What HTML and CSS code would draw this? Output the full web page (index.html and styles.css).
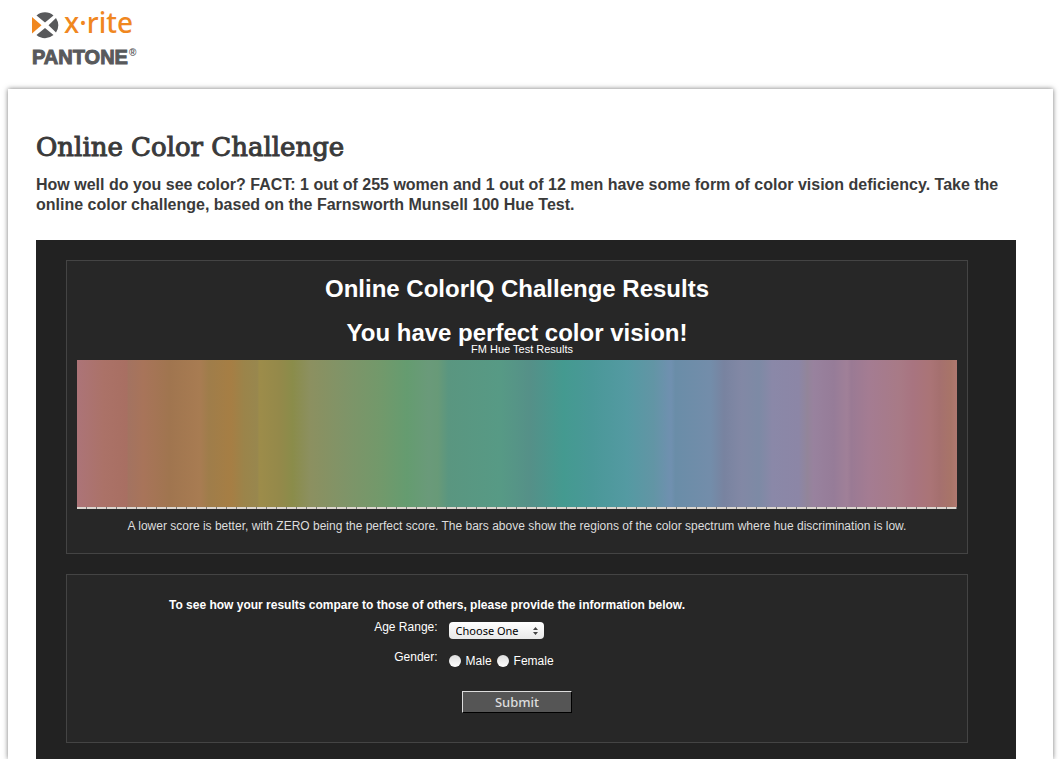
FILE: index.html
```html
<!DOCTYPE html>
<html lang="en">
<head>
<meta charset="utf-8">
<title>Online Color Challenge</title>
<link rel="stylesheet" href="styles.css">
</head>
<body>
<header class="site-header">
  <a class="brand" href="#" aria-label="X-Rite Pantone home">
    <span class="brand-xrite">
      <svg class="brand-mark" viewBox="0 0 27 28" aria-hidden="true">
        <path fill="#58595b" d="M4.500 4.500A13 13 0 0 1 21.500 4.500L13 11.500ZM4.500 24A13 13 0 0 0 21.500 24L13 17ZM24 7A13.500 13.500 0 0 1 24 21.500L16.500 14.300Z"/>
        <path fill="#f0871f" d="M0 6L9.500 14.300L0 22.500Z"/>
      </svg>
      <span class="brand-name">x·rite</span>
    </span>
    <span class="brand-pantone"><span class="brand-word">PANTONE</span><span class="brand-reg">®</span></span>
  </a>
</header>
<main class="card">
  <h1 class="title">Online Color Challenge</h1>
  <p class="intro">How well do you see color? FACT: 1 out of 255 women and 1 out of 12 men have some form of color vision deficiency. Take the online color challenge, based on the Farnsworth Munsell 100 Hue Test.</p>
  <div class="challenge">
    <section class="panel results">
      <h2 class="results-title">Online ColorIQ Challenge Results</h2>
      <h2 class="results-title">You have perfect color vision!</h2>
      <p class="chart-title">FM Hue Test Results</p>
      <div class="spectrum" role="img" aria-label="Hue spectrum"></div>
      <div class="ticks"></div>
      <p class="note">A lower score is better, with ZERO being the perfect score. The bars above show the regions of the color spectrum where hue discrimination is low.</p>
    </section>
    <form class="panel compare">
      <p class="compare-title">To see how your results compare to those of others, please provide the information below.</p>
      <div class="field">
        <label class="field-label" for="age">Age Range:</label>
        <div class="field-control">
          <span class="select-wrap">
            <select class="select" id="age"><option>Choose One</option><option>Under 20</option><option>20-29</option><option>30-39</option><option>40+</option></select>
            <svg class="select-arrows" viewBox="0 0 5 8" aria-hidden="true"><path fill="#444" d="M0 3L2.500 0L5 3ZM0 5L2.500 8L5 5Z"/></svg>
          </span>
        </div>
      </div>
      <div class="field" role="group" aria-labelledby="gender-label">
        <span class="field-label" id="gender-label">Gender:</span>
        <div class="field-control">
          <label class="option"><input class="radio" type="radio" name="gender" value="male">Male</label>
          <label class="option"><input class="radio" type="radio" name="gender" value="female">Female</label>
        </div>
      </div>
      <button class="submit" type="button">Submit</button>
    </form>
  </div>
</main>
</body>
</html>
```

FILE: styles.css
```css
* { box-sizing: border-box; }

body {
  display: flex;
  flex-direction: column;
  min-height: 100vh;
  margin: 0;
  background: #fff;
  color: #333;
  font-family: "Liberation Sans", Arial, sans-serif;
}

h1, h2, p { margin: 0; }

.site-header { padding: 8px 32px 21px; }

.brand {
  display: inline-flex;
  flex-direction: column;
  color: #58595b;
  text-decoration: none;
}

.brand-xrite {
  display: flex;
  align-items: center;
  gap: 5px;
  height: 34px;
}

.brand-mark { width: 27px; height: 28px; }

.brand-name {
  color: #f0871f;
  font: 500 28px/34px "Noto Sans", sans-serif;
  padding-bottom: 6px;
}

.brand-pantone {
  display: flex;
  align-items: flex-start;
  gap: 1px;
  height: 26px;
  font-size: 20px;
  font-weight: 700;
  line-height: 30px;
}

.brand-word { -webkit-text-stroke: 1px #58595b; }

.brand-reg { font-size: 10px; line-height: 22px; }

.card {
  flex: 1;
  display: flex;
  flex-direction: column;
  margin: 0 9px 0 8px;
  padding: 41px 37px 0 28px;
  background: #fff;
  box-shadow: 0 0 5px #777;
}

.title {
  color: #3a3a3a;
  font: 26px/34px "DejaVu Serif", serif;
  -webkit-text-stroke: 1px #3a3a3a;
}

.intro {
  margin-top: 11px;
  color: #3a3a3a;
  font-size: 16px;
  font-weight: 700;
  line-height: 20px;
}

.challenge {
  flex: 1;
  margin-top: 25px;
  padding: 20px 48px 16px 30px;
  background: #222;
  color: #fff;
}

.panel {
  border: 1px solid #444;
  background: #272727;
}

.results {
  padding: 11px 10px 19px;
  text-align: center;
}

.results-title {
  font-size: 24px;
  line-height: 34px;
  margin-bottom: 10px;
}

.chart-title {
  margin-top: -18px;
  padding-left: 10px;
  font-size: 11px;
  line-height: 14px;
}

.spectrum {
  height: 147px;
  margin-top: 4px;
  background: linear-gradient(to right,
    #ac7478 0, #ab7268 3%, #a86f62 5.700%, #a37361 5.800%, #a8745a 7.500%, #a0754f 10.500%,
    #a87c52 14%, #9f7d4a 15%, #a67e44 17.500%, #9b844a 19%, #98874e 20.500%, #9d8c4a 20.700%,
    #94894a 23%, #8a8c4a 24.500%, #8c9060 26.500%, #7f9468 30.500%, #72996b 34.500%, #659c70 37.500%,
    #6a9a7a 40%, #689a78 41%, #5a9680 42.200%, #579a85 48%, #559088 51.500%, #449a90 55.300%,
    #4a9898 58.500%, #549aa2 62.500%, #6295a5 65.500%, #7090b0 67.500%, #6a8da8 68%, #738daa 72%,
    #7883a0 73.500%, #8288a5 75.500%, #7d8aa5 77.500%, #8a88a8 79%, #8c86a6 82%, #92859a 83%,
    #98829e 83.700%, #967c98 86%, #a08098 87.500%, #9a7a94 88%, #a47c92 90%, #a87a86 93.500%,
    #a87480 95%, #aa7476 97%, #a5706f 98%, #a87468 99.300%, #b07870 100%);
}

.ticks {
  height: 2px;
  background: repeating-linear-gradient(to right, #dcd6cf 0 9px, #777 9px 10px);
}

.note {
  margin-top: 9px;
  color: #ddd;
  font-size: 12px;
  line-height: 16px;
}

.compare {
  display: flex;
  flex-direction: column;
  margin-top: 20px;
  padding: 22px 0 29px;
  font-size: 12px;
}

.compare-title {
  width: 80%;
  font-weight: 700;
  line-height: 16px;
  text-align: center;
}

.field {
  display: grid;
  grid-template-columns: 7fr 10fr;
  height: 30px;
  line-height: 16px;
}

.field-label { padding-top: 6px; text-align: right; }

.field-control {
  display: flex;
  align-items: center;
  gap: 5px;
  padding: 5px 0 0 11px;
}

.select-wrap { position: relative; display: flex; }

.select {
  appearance: none;
  width: 95px;
  height: 17px;
  padding: 0 7px;
  border: 0;
  border-radius: 4px;
  background: linear-gradient(#fff, #e8e8e8);
  color: #000;
  font: 11px/17px "Noto Sans", sans-serif;
}

.select-arrows {
  position: absolute;
  top: 5px;
  right: 6px;
  width: 5px;
  height: 8px;
  pointer-events: none;
}

.option { display: flex; align-items: center; gap: 5px; }

.radio {
  appearance: none;
  width: 12px;
  height: 12px;
  margin: 0;
  border-radius: 50%;
  background: linear-gradient(#ddd, #fff);
}

.radio:checked { border: 4px solid #fff; background: #333; }

.submit {
  align-self: center;
  width: 110px;
  height: 22px;
  margin-top: 18px;
  padding: 0;
  border: 1px solid;
  border-color: #ddd #000 #000 #ddd;
  background: #555;
  color: #ddd;
  font: 500 13px/18px "Noto Sans", sans-serif;
}
```
